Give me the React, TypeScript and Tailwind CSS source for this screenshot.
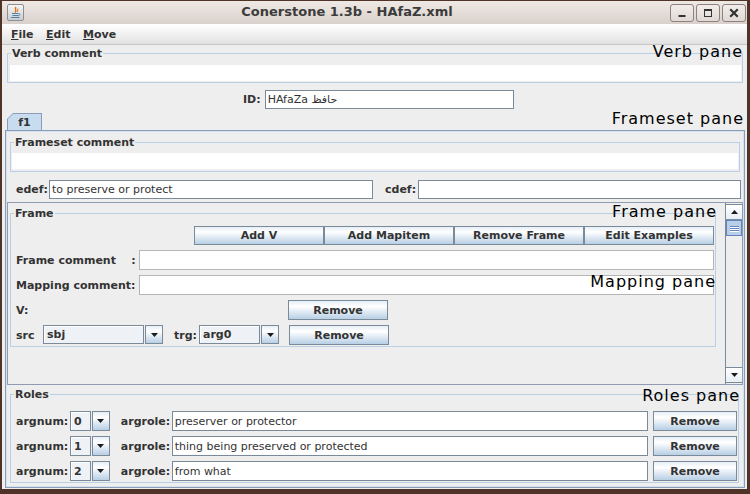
import React from "react";

const LBL = "text-[11px] leading-[13px] font-bold text-[#333] whitespace-pre";
const BTN =
  "flex items-center justify-center border border-[#7a8a99] bg-[linear-gradient(to_bottom,#e6eef7_0%,#ffffff_30%,#b8cfe5_100%)] text-[11px] leading-[13px] font-bold text-[#333]";
const FIELD =
  "bg-white border border-[#7a8a99] text-[11px] leading-[13px] text-[#333] flex items-center pl-[2px] whitespace-pre overflow-hidden";
const NOTE =
  "absolute text-[16px] leading-[19px] tracking-[1px] text-black font-normal whitespace-nowrap";

function Tri({ down = true }: { down?: boolean }) {
  return (
    <svg width="7" height="4" viewBox="0 0 7 4">
      {down ? <path d="M0 0H7L3.5 4Z" fill="#1c1c1c" /> : <path d="M0 4H7L3.5 0Z" fill="#1c1c1c" />}
    </svg>
  );
}

function Combo({ value, className }: { value: string; className: string }) {
  return (
    <div className={`flex ${className}`}>
      <div className="flex-1 flex items-center pl-[3px] border border-[#7a8a99] bg-[#eef1f5] shadow-[inset_1px_1px_0_#ffffff] text-[11px] leading-[13px] font-bold text-[#333]">
        {value}
      </div>
      <div className="w-[18px] ml-px flex items-center justify-center border border-[#7a8a99] bg-[linear-gradient(to_bottom,#e6eef7_0%,#ffffff_30%,#b8cfe5_100%)]">
        <Tri />
      </div>
    </div>
  );
}

function Titled({
  title,
  className,
  children,
}: {
  title: string;
  className: string;
  children?: React.ReactNode;
}) {
  return (
    <div className={`relative border border-[#b8cfe5] ${className}`}>
      <span className="absolute -top-[7px] left-[3px] px-px bg-[#eeeeee] text-[11px] leading-[13px] font-bold text-[#333]">
        {title}
      </span>
      {children}
    </div>
  );
}

function JavaIcon() {
  return (
    <div className="w-[17px] h-[17px] rounded-[2px] border border-[#8f8f8f] bg-[linear-gradient(to_bottom,#f6f6f6,#c9ced6)] flex items-center justify-center">
      <svg width="13" height="13" viewBox="0 0 13 13">
        <path d="M7 1C5 3 8.5 3.5 6 6.5" stroke="#e76f00" strokeWidth="1.4" fill="none" />
        <path d="M9 2.5C8 4 9.5 4.5 8 6" stroke="#e76f00" strokeWidth="1" fill="none" />
        <path d="M3 7.5H9.5M3.5 9.5H9M2 11.5H10.5" stroke="#5382a1" strokeWidth="1.2" fill="none" />
        <path d="M9.5 7.5C11.5 7.5 11.5 9.5 9 9.8" stroke="#5382a1" strokeWidth="1" fill="none" />
      </svg>
    </div>
  );
}

function WinBtn({ kind }: { kind: "min" | "max" | "close" }) {
  return (
    <div className="w-[24px] h-[18px] rounded-[3px] border border-[#8d827c] bg-[linear-gradient(to_bottom,#f2eeeb,#e0d9d5)] flex items-center justify-center">
      <svg width="10" height="10" viewBox="0 0 10 10">
        {kind === "min" && <rect x="1.5" y="7" width="7" height="2" fill="#333" />}
        {kind === "max" && (
          <>
            <rect x="1.5" y="1.5" width="7" height="7" fill="none" stroke="#333" strokeWidth="1" />
            <rect x="1" y="1" width="8" height="2" fill="#333" />
          </>
        )}
        {kind === "close" && (
          <path d="M2 2L8 8M8 2L2 8" stroke="#333" strokeWidth="2.2" strokeLinecap="square" />
        )}
      </svg>
    </div>
  );
}

function RoleRow({ num, role }: { num: string; role: string }) {
  return (
    <div className="flex h-[20px] items-center">
      <span className={`${LBL} w-[54px]`}>argnum:</span>
      <Combo value={num} className="w-[40px] h-[20px]" />
      <span className={`${LBL} w-[50px] ml-[11px]`}>argrole:</span>
      <div className={`${FIELD} w-[477px] h-[20px] ml-px`}>{role}</div>
      <button className={`${BTN} w-[84px] h-[20px] ml-[5px]`}>Remove</button>
    </div>
  );
}

export default function App() {
  return (
    <div className="relative w-[750px] h-[494px] bg-[#4f3326] pt-px pl-[2px] pr-[3px] pb-[5px] flex flex-col font-['DejaVu_Sans',sans-serif] overflow-hidden">
      {/* Title bar */}
      <div className="h-[23px] flex items-center bg-[linear-gradient(to_bottom,#efe9e5,#d9d0cb)]">
        <div className="ml-[5px]">
          <JavaIcon />
        </div>
        <div className="flex-1 flex justify-center pb-px text-[13px] leading-[16px] font-bold text-[#3c3c3c]">
          Conerstone 1.3b - HAfaZ.xml
        </div>
        <div className="flex gap-[2px] mr-[1px]">
          <WinBtn kind="min" />
          <WinBtn kind="max" />
          <WinBtn kind="close" />
        </div>
      </div>

      {/* Menu bar */}
      <div className="h-[21px] flex items-center pl-[9px] border-b border-[#c6c6c6] bg-[linear-gradient(to_bottom,#ffffff,#e1e1e1)] text-[11px] leading-[13px] font-bold text-[#333]">
        <span className="w-[35px]">
          <span className="underline">F</span>ile
        </span>
        <span className="w-[37px]">
          <span className="underline">E</span>dit
        </span>
        <span>
          <span className="underline">M</span>ove
        </span>
      </div>

      {/* Content */}
      <div className="flex-1 bg-[#eeeeee] flex flex-col">
        {/* Verb comment */}
        <Titled title="Verb comment" className="mt-[8px] ml-[5px] mr-[4px] pt-[11px] pb-[1px] pl-[2px] pr-[1px]">
          <div className="h-[16px] bg-white" />
        </Titled>

        {/* ID row */}
        <div className="mt-[7px] h-[19px] flex items-center ml-[241px]">
          <span className={LBL}>ID:</span>
          <div className={`${FIELD} w-[249px] h-[19px] ml-[4px]`}>HAfaZa حافظ</div>
        </div>

        {/* Tabs */}
        <div className="mt-[4px] ml-[3px] mr-[2px] flex flex-col">
          <div className="h-[17px] flex">
            <div className="ml-[2px] w-[35px] h-[17px] bg-[#8b9cb8] pt-px px-px [clip-path:polygon(6px_0,100%_0,100%_100%,0_100%,0_6px)]">
              <div className="w-full h-full bg-[#c8dcf0] flex items-center justify-center [clip-path:polygon(5px_0,100%_0,100%_100%,0_100%,0_5px)]">
                <span className={LBL}>f1</span>
              </div>
            </div>
          </div>
          <div className="h-[358px] border border-[#8b9cb8] shadow-[inset_0_0_0_1px_#d4e1ef] flex flex-col">
            {/* Frameset comment */}
            <Titled title="Frameset comment" className="mt-[11px] ml-[4px] mr-[4px] pt-[10px] pb-[2px] px-px">
              <div className="h-[16px] bg-white" />
            </Titled>

            {/* edef / cdef */}
            <div className="mt-[8px] h-[19px] flex items-center ml-[10px]">
              <span className={`${LBL} w-[33px]`}>edef:</span>
              <div className={`${FIELD} w-[324px] h-[19px]`}>to preserve or protect</div>
              <span className={`${LBL} w-[33px] ml-[12px]`}>cdef:</span>
              <div className={`${FIELD} w-[323px] h-[19px]`} />
            </div>

            {/* Scroll pane with Frame */}
            <div className="mt-[3px] ml-px mr-px h-[183px] border border-[#8e9bb0] flex">
              <div className="flex-1 flex flex-col">
                <Titled title="Frame" className="mt-[10px] ml-[2px] mr-[9px] pt-[12px] pb-px pl-[5px] pr-px">
                  <div className="flex flex-col gap-[5px]">
                    <div className="h-[19px] flex justify-end">
                      <button className={`${BTN} w-[130px] h-[19px]`}>Add V</button>
                      <button className={`${BTN} w-[130px] h-[19px]`}>Add Mapitem</button>
                      <button className={`${BTN} w-[130px] h-[19px]`}>Remove Frame</button>
                      <button className={`${BTN} w-[130px] h-[19px]`}>Edit Examples</button>
                    </div>
                    <div className="h-[20px] flex items-center">
                      <span className={`${LBL} w-[123px]`}>{"Frame comment    :"}</span>
                      <div className="flex-1 h-[20px] bg-white border border-[#b5b5b5]" />
                    </div>
                    <div className="h-[20px] flex items-center">
                      <span className={`${LBL} w-[123px]`}>Mapping comment:</span>
                      <div className="flex-1 h-[20px] bg-white border border-[#b5b5b5]" />
                    </div>
                    <div className="h-[20px] flex items-center">
                      <span className={`${LBL} w-[272px]`}>V:</span>
                      <button className={`${BTN} w-[100px] h-[20px]`}>Remove</button>
                    </div>
                    <div className="h-[20px] flex items-start">
                      <span className={`${LBL} w-[27px] h-[20px] flex items-center`}>src</span>
                      <Combo value="sbj" className="w-[120px] h-[19px]" />
                      <span className={`${LBL} w-[25px] ml-[11px] h-[20px] flex items-center`}>trg:</span>
                      <Combo value="arg0" className="w-[80px] h-[19px]" />
                      <button className={`${BTN} w-[100px] h-[20px] ml-[10px]`}>Remove</button>
                    </div>
                  </div>
                </Titled>
              </div>
              {/* Scrollbar */}
              <div className="w-[17px] border-l border-[#7a8a99] bg-[#eeeeee] flex flex-col">
                <div className="mt-px h-[16px] border-y border-[#7a8a99] bg-[linear-gradient(to_bottom,#ffffff,#e8eef5)] flex items-center justify-center">
                  <Tri down={false} />
                </div>
                <div className="h-[16px] border border-[#6382bf] bg-[#b8cfe5] flex flex-col items-center justify-center gap-[1px]">
                  <div className="w-[9px] h-px bg-[#6382bf] shadow-[0_1px_0_#ffffff]" />
                  <div className="w-[9px] h-px bg-[#6382bf] shadow-[0_1px_0_#ffffff]" />
                  <div className="w-[9px] h-px bg-[#6382bf] shadow-[0_1px_0_#ffffff]" />
                </div>
                <div className="flex-1" />
                <div className="mb-px h-[16px] border-y border-[#7a8a99] bg-[linear-gradient(to_bottom,#ffffff,#e8eef5)] flex items-center justify-center">
                  <Tri />
                </div>
              </div>
            </div>

            {/* Roles */}
            <Titled title="Roles" className="mt-[9px] ml-[4px] mr-[5px] pt-[16px] pb-px pl-[5px] pr-px">
              <div className="flex flex-col gap-[5px]">
                <RoleRow num="0" role="preserver or protector" />
                <RoleRow num="1" role="thing being preserved or protected" />
                <RoleRow num="2" role="from what" />
              </div>
            </Titled>
          </div>
        </div>
      </div>

      {/* Annotations */}
      <span className={`${NOTE} top-[42px] right-[7px]`}>Verb pane</span>
      <span className={`${NOTE} top-[109px] right-[6px]`}>Frameset pane</span>
      <span className={`${NOTE} top-[202px] right-[33px]`}>Frame pane</span>
      <span className={`${NOTE} top-[272px] right-[34px]`}>Mapping pane</span>
      <span className={`${NOTE} top-[386px] right-[10px]`}>Roles pane</span>
    </div>
  );
}
